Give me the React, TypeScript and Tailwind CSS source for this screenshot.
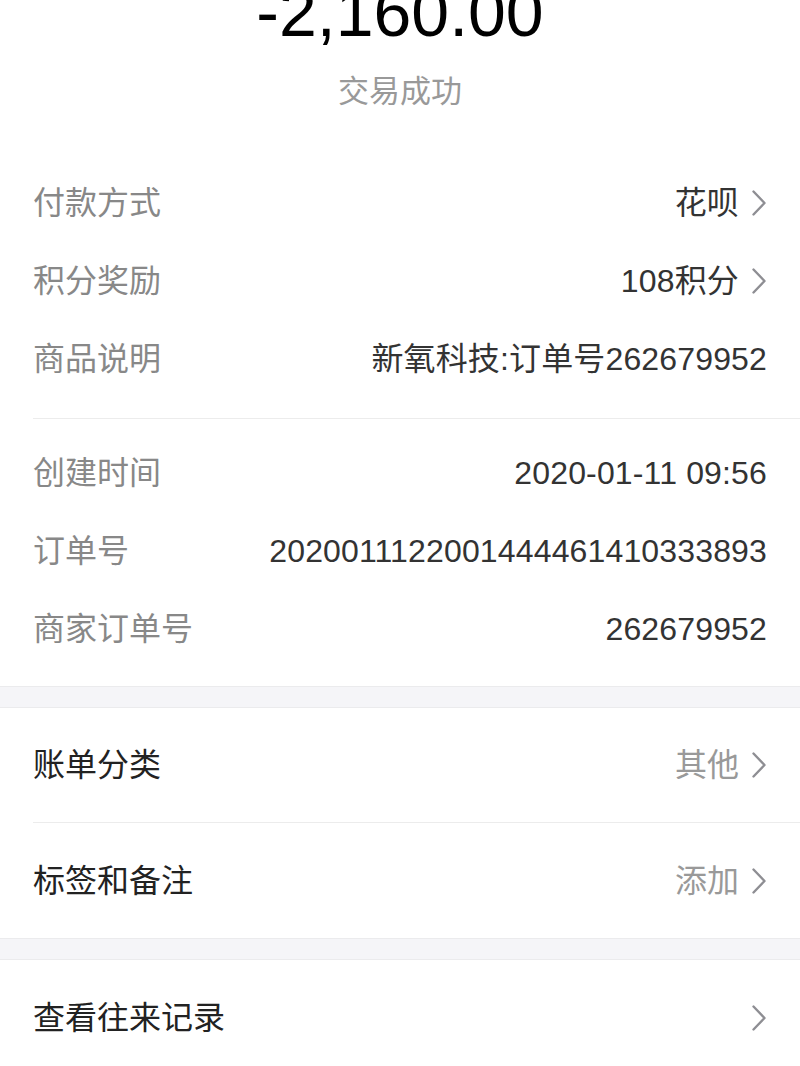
const font = { fontFamily: '"Liberation Sans", "Noto Sans CJK SC", sans-serif' };

function Chevron() {
  return (
    <svg width="16" height="28" viewBox="0 0 16 28" className="ml-3 shrink-0" fill="none">
      <path d="M2.5 2.5 L13.5 14 L2.5 25.5" stroke="#8e8e93" strokeWidth="2.4" strokeLinecap="round" strokeLinejoin="round" />
    </svg>
  );
}

type Info = { label: string; value: string; arrow?: boolean };

const payment: Info[] = [
  { label: "付款方式", value: "花呗", arrow: true },
  { label: "积分奖励", value: "108积分", arrow: true },
  { label: "商品说明", value: "新氧科技:订单号262679952" },
];

const order: Info[] = [
  { label: "创建时间", value: "2020-01-11 09:56" },
  { label: "订单号", value: "2020011122001444461410333893" },
  { label: "商家订单号", value: "262679952" },
];

function InfoRow({ item }: { item: Info }) {
  return (
    <div className="flex h-[78px] items-center justify-between pr-[33px]">
      <span className="text-[#888888]">{item.label}</span>
      <div className="flex items-center text-[#333333]">
        <span className="tracking-[0.15px]">{item.value}</span>
        {item.arrow && <Chevron />}
      </div>
    </div>
  );
}

function ActionRow({ label, value, border }: { label: string; value?: string; border?: boolean }) {
  return (
    <div className={`flex h-[115px] items-center justify-between pr-[33px] ${border ? "border-b border-[#ececec]" : ""}`}>
      <span className="text-[#222222]">{label}</span>
      <div className="flex items-center text-[#999999]">
        {value && <span>{value}</span>}
        <Chevron />
      </div>
    </div>
  );
}

function Band() {
  return <div className="h-[22px] border-y border-[#ebebed] bg-[#f5f5f8]" />;
}

export default function App() {
  return (
    <div className="h-[1066px] w-[800px] overflow-hidden bg-white text-[32px] leading-none" style={font}>
      {/* Amount header */}
      <div className="-mt-[22px] text-center text-[68px] leading-[68px] text-black">-2,160.00</div>
      <div className="mt-[26px] text-center text-[31px] leading-[40px] text-[#999999]">交易成功</div>

      {/* Payment details */}
      <div className="mt-[52px] pl-[33px]">
        {payment.map((item) => (
          <InfoRow key={item.label} item={item} />
        ))}
        <div className="mt-[20px] h-px bg-[#ececec]" />
        <div className="pt-[15px] pb-[18px]">
          {order.map((item) => (
            <InfoRow key={item.label} item={item} />
          ))}
        </div>
      </div>

      <Band />

      <div className="pl-[33px]">
        <ActionRow label="账单分类" value="其他" border />
        <ActionRow label="标签和备注" value="添加" />
      </div>

      <Band />

      <div className="pl-[33px]">
        <ActionRow label="查看往来记录" />
      </div>
    </div>
  );
}
